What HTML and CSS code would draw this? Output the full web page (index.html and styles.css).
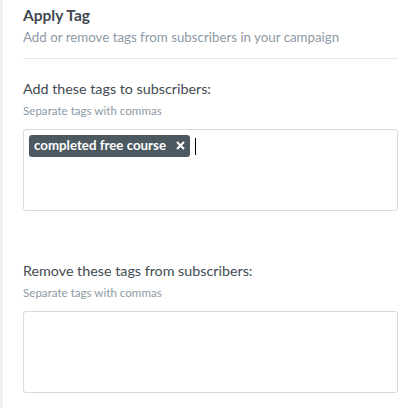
FILE: index.html
```html
<!DOCTYPE html>
<html lang="en">
<head>
  <meta charset="UTF-8" />
  <title>Apply Tag</title>
  <link rel="stylesheet" href="styles.css">
</head>
<body>
  <div class="panel">
    <div class="panel-head">
      <h2 class="panel-title">Apply Tag</h2>
      <div class="panel-sub">Add or remove tags from subscribers in your campaign</div>
    </div>

    <div class="field">
      <label class="field-label">Add these tags to subscribers:</label>
      <div class="field-hint">Separate tags with commas</div>
      <div class="tag-box">
        <span class="tag">completed free course
          <svg class="tag-x" width="9" height="9" viewBox="0 0 9 9"><path d="M1 1L8 8M8 1L1 8" stroke="#fff" stroke-width="2"/></svg>
        </span>
        <span class="caret"></span>
      </div>
    </div>

    <div class="field field-remove">
      <label class="field-label">Remove these tags from subscribers:</label>
      <div class="field-hint">Separate tags with commas</div>
      <div class="tag-box"></div>
    </div>
  </div>
</body>
</html>
```

FILE: styles.css
```css
body {
  margin: 0;
  background: #fff;
  font-family: Lato, "Open Sans", sans-serif;
  color: #3f4a52;
}
.panel {
  border-left: 3px solid #f0f0f0;
  padding: 6px 12px 0 20px;
  min-height: 408px;
  box-sizing: border-box;
}
.panel-head {
  border-bottom: 1px solid #e6e6e6;
  padding-bottom: 13px;
}
.panel-title {
  font-size: 15.5px;
  font-weight: bold;
  margin: 0 0 5px 0;
  color: #3f4a52;
}
.panel-sub {
  font-size: 13.3px;
  color: #8d9aa5;
}
.field {
  margin-top: 21px;
}
.field-remove {
  margin-top: 51px;
}
.field-label {
  display: block;
  font-size: 14.3px;
  color: #424b52;
}
.field-hint {
  font-size: 11.6px;
  color: #8d9aa5;
  margin-top: 7px;
}
.tag-box {
  margin-top: 12px;
  height: 82px;
  box-sizing: border-box;
  border: 1px solid #dadada;
  border-radius: 3px;
  padding: 5px;
  display: flex;
  align-items: flex-start;
  gap: 5px;
}
.tag {
  background: #4d5961;
  color: #fff;
  font-weight: bold;
  font-size: 13.3px;
  border-radius: 3px;
  padding: 3px 5px 4px 5px;
  height: 15px;
  line-height: 15px;
  display: flex;
  align-items: center;
  gap: 10px;
}
.caret {
  width: 1px;
  height: 17px;
  margin-top: 3px;
  background: #000;
}
```
